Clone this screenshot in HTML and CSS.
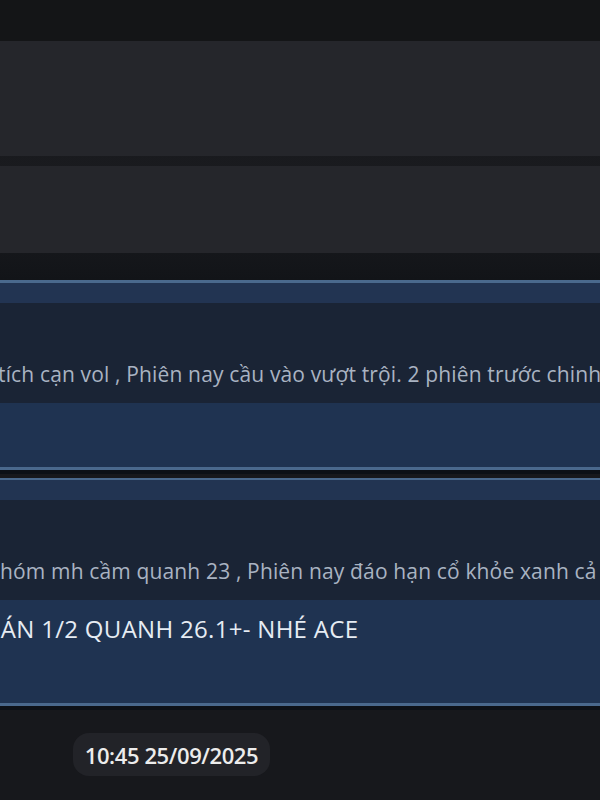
FILE: index.html
```html
<!DOCTYPE html>
<html lang="vi">
<head>
  <meta charset="UTF-8" />
  <meta name="viewport" content="width=device-width, initial-scale=1.0" />
  <title>Tin nhắn</title>
  <link rel="stylesheet" href="styles.css">
</head>
<body>
  <div class="topbar"></div>

  <!-- Earlier messages (collapsed) -->
  <div class="panels">
    <div class="panel tall"></div>
    <div class="panel short"></div>
  </div>

  <div class="card first">
    <div class="card-head"></div>
    <div class="card-body">
      <div class="line muted cut-t">tích cạn vol , Phiên nay cầu vào vượt trội. 2 phiên trước chinh</div>
    </div>
    <div class="card-foot"></div>
  </div>

  <div class="card second">
    <div class="card-head"></div>
    <div class="card-body">
      <div class="line muted cut-n">nhóm mh cầm quanh 23 , Phiên nay đáo hạn cổ khỏe xanh cả phiên</div>
    </div>
    <div class="card-foot tall">
      <div class="line strong cut-b">BÁN 1/2 QUANH 26.1+- NHÉ ACE</div>
    </div>
  </div>

  <div class="stamp-row">
    <span class="stamp">10:45 25/09/2025</span>
  </div>
</body>
</html>
```

FILE: styles.css
```css
html, body {
  margin: 0;
  padding: 0;
  width: 100%;
  height: 100%;
  overflow: hidden;
  background: #17181c;
  font-family: "Open Sans", "Noto Sans", sans-serif;
}

.topbar {
  height: 41px;
  background: #141517;
}

/* Collapsed grey panels */
.panels {
  display: flex;
  flex-direction: column;
  gap: 10px;
  padding-bottom: 27px;
  background: linear-gradient(#18191d, #1a1b1f 70%, #121418);
}
.panel {
  background: #25262b;
}
.panel.tall {
  height: 115px;
}
.panel.short {
  height: 87px;
}

/* Blue message cards */
.card {
  border-top: 3px solid #4a698d;
  border-bottom: 3px solid #4a698d;
  background: #1f3351;
}
.card.first {
  margin-bottom: 8px;
  box-shadow: 0 4px 0 #0c1016;
}
.card.second {
  border-top-width: 2px;
  box-shadow: 0 4px 0 #0d1117;
}
.card-head {
  height: 20px;
  background: #223452;
}
.card-body {
  height: 100px;
  box-sizing: border-box;
  padding-top: 57px;
  background: #1a2435;
}
.card-foot {
  height: 64px;
  box-sizing: border-box;
  background: #1f3351;
}
.card-foot.tall {
  height: 103px;
  padding-top: 13px;
}

.line {
  white-space: nowrap;
  overflow: hidden;
}
.line.muted {
  font-size: 21px;
  line-height: 28px;
  letter-spacing: 0.15px;
  color: #a9b3c2;
}
.line.strong {
  font-size: 24px;
  line-height: 32px;
  font-weight: 500;
  letter-spacing: 0.3px;
  color: #e6ecf3;
}
.cut-t {
  text-indent: -2px;
}
.cut-n {
  text-indent: -13px;
}
.cut-b {
  text-indent: -15px;
}

/* Timestamp */
.stamp-row {
  display: flex;
  padding: 27px 0 0 73px;
}
.stamp {
  display: inline-flex;
  align-items: center;
  justify-content: center;
  width: 197px;
  height: 43px;
  border-radius: 16px;
  background: #222328;
  color: #ececec;
  font-size: 22px;
  font-weight: 600;
  letter-spacing: -0.4px;
}
```
